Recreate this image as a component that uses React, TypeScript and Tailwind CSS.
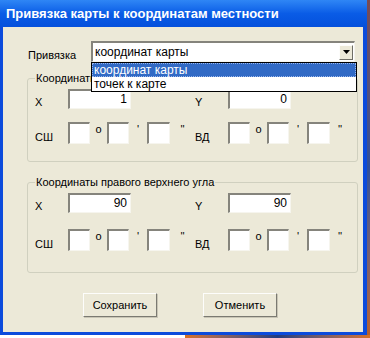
import React from "react";

const font = { fontFamily: '"Liberation Sans", Arial, sans-serif' };

function Field({ w, value }: { w: string; value?: string }) {
  return (
    <div
      className={`${w} h-full bg-white border-t-2 border-l-2 border-b border-r border-t-[#85847c] border-l-[#85847c] border-b-[#f6f5ee] border-r-[#f6f5ee] pr-[3px] text-right leading-[16px] text-[12px] text-black`}
    >
      {value}
    </div>
  );
}

function Label({ w, children }: { w: string; children: React.ReactNode }) {
  return <div className={`${w} self-end leading-[14px] text-black`}>{children}</div>;
}

function Mark({ w, children }: { w: string; children: React.ReactNode }) {
  return <div className={`${w} self-start pt-[1px] text-center leading-[12px] text-black`}>{children}</div>;
}

function CoordGroup({ title, x, y, tall }: { title: string; x: string; y: string; tall?: boolean }) {
  return (
    <fieldset className={`rounded-[3px] border border-[#d0d0bf] px-[7px] ${tall ? "pb-[21px]" : "pb-[17px]"}`}>
      <legend className="px-[1px] leading-[13px] text-black">{title}</legend>
      <div className="mt-[4px] flex h-[20px]">
        <Label w="w-[33px]">X</Label>
        <Field w="w-[63px]" value={x} />
        <div className="w-[64px]" />
        <Label w="w-[33px]">Y</Label>
        <Field w="w-[63px]" value={y} />
      </div>
      <div className={`${tall ? "mt-[16px]" : "mt-[13px]"} flex h-[22px]`}>
        <Label w="w-[33px]">СШ</Label>
        <Field w="w-[22px]" />
        <Mark w="w-[17px]">о</Mark>
        <Field w="w-[22px]" />
        <Mark w="w-[18px]">'</Mark>
        <Field w="w-[23px]" />
        <Mark w="w-[25px]">''</Mark>
        <Label w="w-[33px]">ВД</Label>
        <Field w="w-[22px]" />
        <Mark w="w-[17px]">о</Mark>
        <Field w="w-[22px]" />
        <Mark w="w-[18px]">'</Mark>
        <Field w="w-[23px]" />
        <Mark w="w-[20px]">''</Mark>
      </div>
    </fieldset>
  );
}

function XpButton({ children }: { children: React.ReactNode }) {
  return (
    <div className="flex h-[24px] w-[74px] items-center justify-center border border-t-[#fdfdfb] border-l-[#fdfdfb] border-b-[#7b7a72] border-r-[#7b7a72] bg-[#ece9d8] text-black shadow-[1px_1px_0_#c9c6b6]">
      {children}
    </div>
  );
}

export default function App() {
  return (
    <div className="flex h-[338px] w-[370px] flex-col overflow-hidden bg-white text-[11px]" style={font}>
      <div className="flex h-[335px]">
        <div className="flex w-[367px] flex-col">
          <div className="flex h-[27px] items-center bg-gradient-to-b from-[#2f86f5] via-[#0a5ce6] to-[#0550dc] pl-[6px] text-[13px] font-bold text-white">
            Привязка карты к координатам местности
          </div>
          <div className="flex flex-1 flex-col border-b-[3px] border-l-[3px] border-r-[4px] border-[#0b4bdc] bg-[#ece9d8] pl-[24px] pr-[8px] pt-[14px]">
            <div className="relative z-10 flex h-[21px]">
              <div className="w-[64px] self-end pl-[1px] leading-[14px] text-black">Привязка</div>
              <div className="relative flex flex-1 items-center border-t-2 border-l-2 border-b border-r border-t-[#85847c] border-l-[#85847c] border-b-[#f6f5ee] border-r-[#f6f5ee] bg-white">
                <div className="flex-1 pl-[2px] text-[12px] text-black">координат карты</div>
                <div className="mr-[1px] flex h-[15px] w-[14px] items-center justify-center border border-t-[#fdfdfb] border-l-[#fdfdfb] border-b-[#6f6e66] border-r-[#6f6e66] bg-[#ece9d8]">
                  <svg width="7" height="4" viewBox="0 0 7 4">
                    <path d="M0 0h7L3.5 4z" fill="#000" />
                  </svg>
                </div>
                <div className="absolute left-[-2px] top-[19px] w-[266px] border border-black bg-white text-[12px]">
                  <div className="h-[14px] border border-dotted border-[#9ab6ea] bg-[#316ac5] pl-[1px] leading-[12px] text-white">
                    координат карты
                  </div>
                  <div className="h-[14px] pl-[2px] leading-[14px] text-black">точек к карте</div>
                </div>
              </div>
            </div>

            <div className="mt-[10px]">
              <CoordGroup title="Координаты левого нижнего угла" x="1" y="0" />
            </div>
            <div className="mt-[14px]">
              <CoordGroup title="Координаты правого верхнего угла" x="90" y="90" tall />
            </div>

            <div className="mt-[20px] flex gap-[46px] pl-[56px]">
              <XpButton>Сохранить</XpButton>
              <XpButton>Отменить</XpButton>
            </div>
          </div>
        </div>
        <div className="w-[3px] bg-gradient-to-b from-[#7a4a52] via-[#2f4f9a] to-[#b8602a]" />
      </div>
      <div className="flex h-[3px]">
        <div className="w-[185px] bg-white" />
        <div className="flex-1 bg-gradient-to-r from-[#d8701f] via-[#203a80] to-[#d8701f]" />
      </div>
    </div>
  );
}
